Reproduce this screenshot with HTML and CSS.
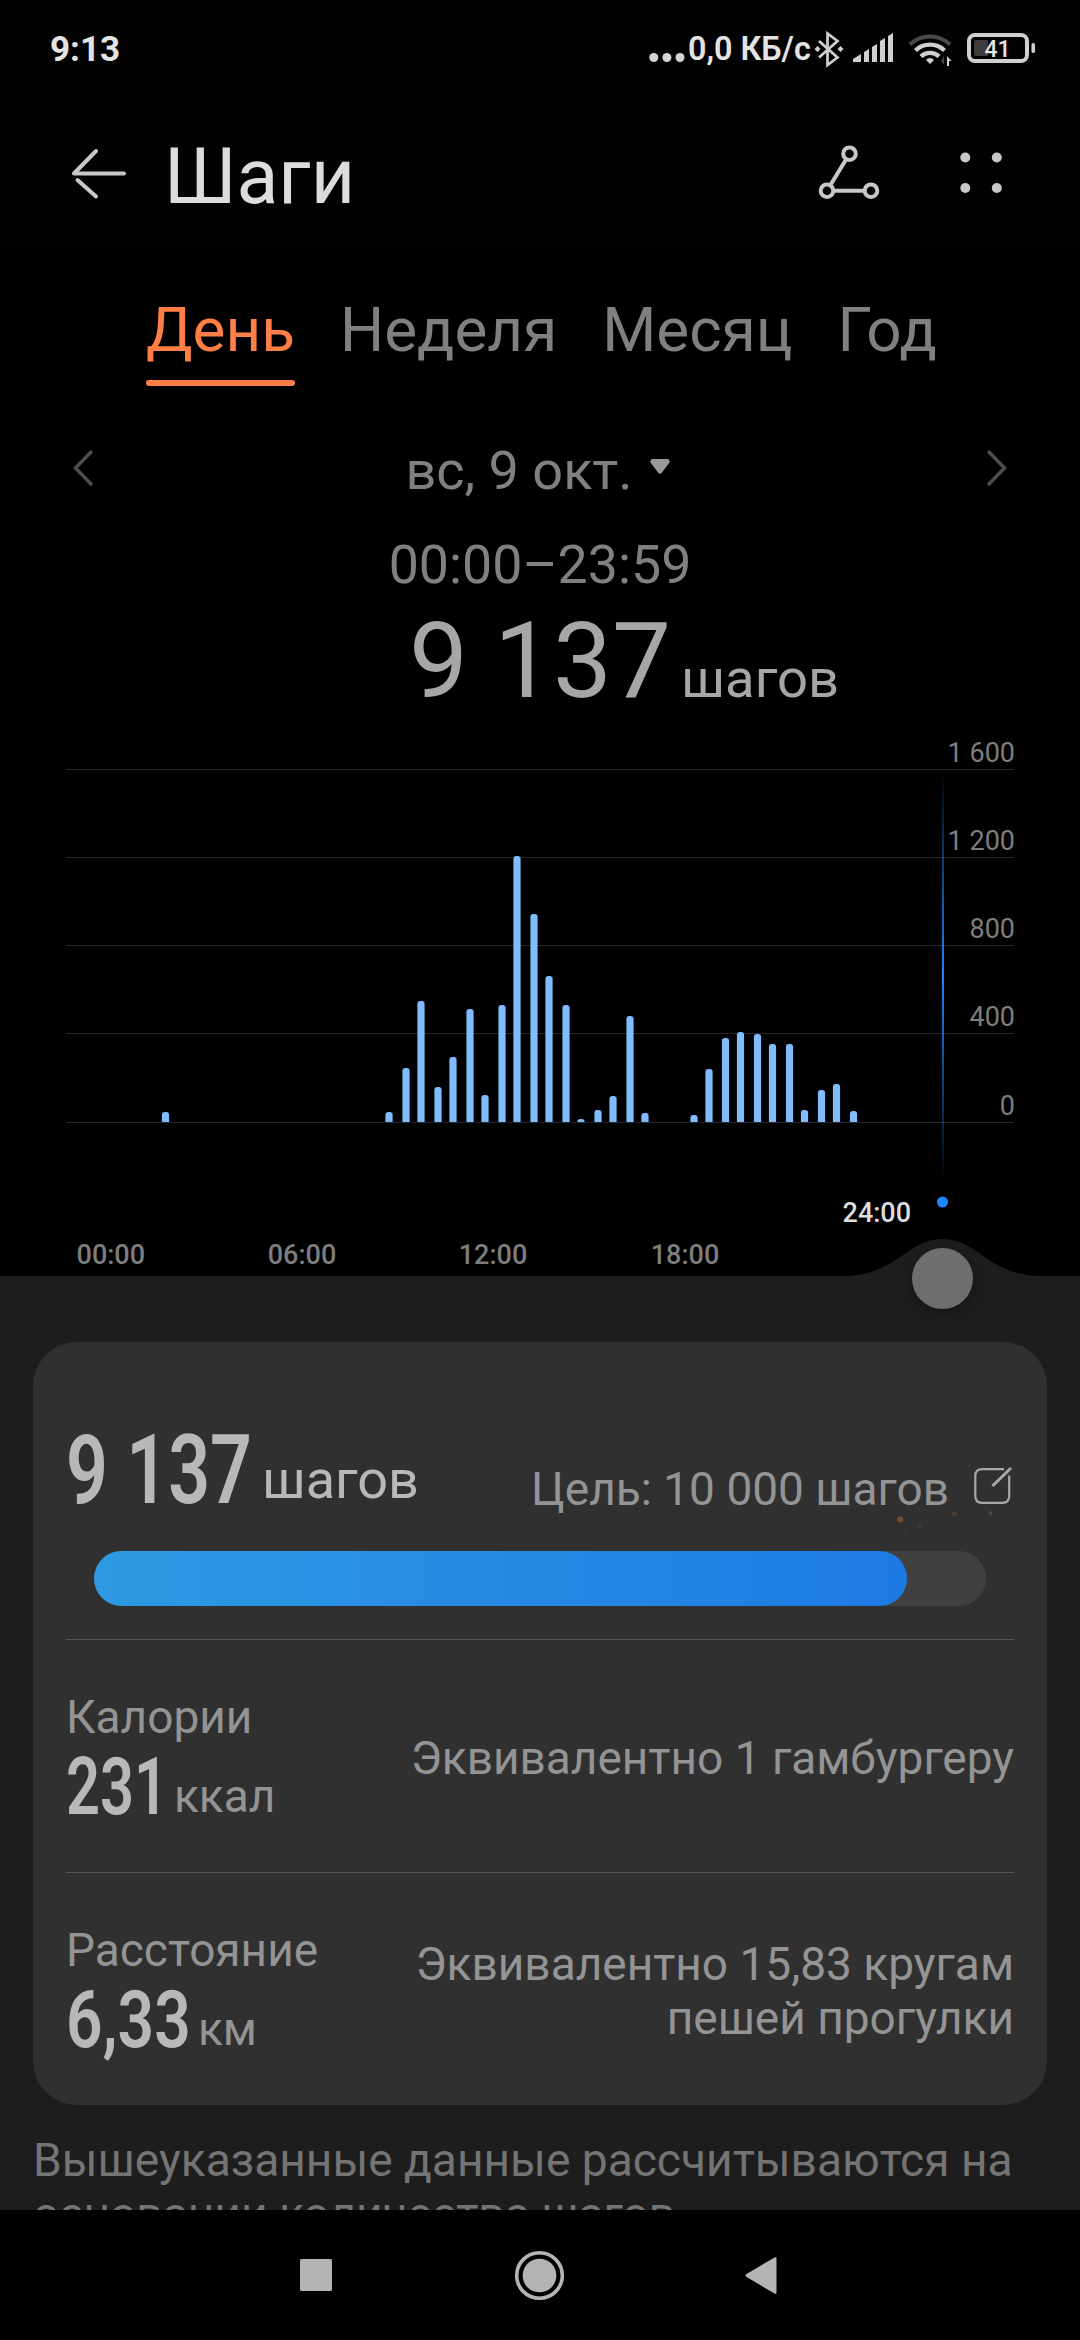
FILE: index.html
```html
<!DOCTYPE html>
<html lang="ru">
<head>
    <meta charset="UTF-8">
    <meta name="viewport" content="width=device-width, initial-scale=1.0">
    <title>Шаги</title>
    <link rel="stylesheet" href="styles.css">
</head>
<body>

<div class="status-bar">
    <span class="clock">9:13</span>
    <svg class="more-dots" width="36" height="34" viewBox="0 0 36 34" fill="#d4d4d4">
        <circle cx="4.8" cy="25.5" r="4.5"/><circle cx="17.9" cy="25.5" r="4.5"/><circle cx="31" cy="25.5" r="4.5"/>
    </svg>
    <span class="speed">0,0 КБ/с</span>
    <!-- bluetooth, signal, wifi, battery -->
    <svg class="status-icons" width="226" height="38" viewBox="812 30 226 38">
        <g fill="none" stroke="#d0d0d0" stroke-width="2.7">
            <path d="M819 41l18.500 16.500-10 7.500V33.500l10 7.500L819 57.500"/>
        </g>
        <path d="M817.500 46l3 3-3 3-3-3zM840.500 46l3 3-3 3-3-3z" fill="#d0d0d0"/>
        <g fill="#d0d0d0">
            <path d="M853 62v-3l8-5v8zM864 62V52l5-3v13zM872 62V47l5-3v18zM880 62V41l5-3v24zM888 62V36l5-3v29z"/>
        </g>
        <g fill="none" stroke-width="4.200">
            <path d="M910 44.500a29 29 0 0 1 40 0" stroke="#484848"/>
            <path d="M915.500 50.500a21 21 0 0 1 29 0" stroke="#d0d0d0"/>
            <path d="M921 56.500a13 13 0 0 1 18 0" stroke="#d0d0d0"/>
        </g>
        <path d="M926 60q4-4 8 0l-4 4z" fill="#d0d0d0"/>
        <path d="M944 56v9l-3-4z" fill="#444"/>
        <path d="M947 66V56l4.500 5H949v5z" fill="#d0d0d0"/>
        <rect x="969" y="35" width="58" height="26" rx="6" fill="none" stroke="#d0d0d0" stroke-width="4"/>
        <path d="M976 40h12v16h-12a2 2 0 0 1-2-2V42a2 2 0 0 1 2-2z" fill="#3c3c3c"/>
        <rect x="1031.500" y="43" width="3.500" height="10" rx="1.700" fill="#d0d0d0"/>
        <text class="battery-text" x="997.500" y="57" text-anchor="middle">41</text>
    </svg>
</div>

<header class="header">
    <svg class="back" width="56" height="54" viewBox="71 146 56 54" fill="none" stroke="#c8c8c8" stroke-width="4" stroke-linecap="round" stroke-linejoin="round">
        <path d="M124 172.500H74L96 150M77.500 179L96 195.500"/>
    </svg>
    <h1>Шаги</h1>
    <svg class="share" width="64" height="60" viewBox="817 143 64 60" fill="none" stroke="#c8c8c8" stroke-width="4">
        <circle cx="849.500" cy="152.700" r="6.300"/>
        <circle cx="827" cy="189.700" r="6.300"/>
        <circle cx="871" cy="189.700" r="6.300"/>
        <path d="M846.200 158.200L830.300 184.300M833.300 189.700h31.400"/>
    </svg>
    <svg class="menu" width="44" height="44" viewBox="959 150 44 44" fill="#c8c8c8">
        <circle cx="965.300" cy="155.500" r="5"/><circle cx="996.800" cy="155.500" r="5"/>
        <circle cx="965.300" cy="186" r="5"/><circle cx="996.800" cy="186" r="5"/>
    </svg>
</header>

<nav class="tabs">
    <span class="tab active">День</span>
    <span class="tab">Неделя</span>
    <span class="tab">Месяц</span>
    <span class="tab">Год</span>
</nav>

<div class="date-row">
    <svg width="22" height="38" viewBox="0 0 22 38" fill="none" stroke="#4d4d4d" stroke-width="3.500" stroke-linecap="round"><path d="M19 3L3.500 19 19 35"/></svg>
    <span class="date">вс, 9 окт.<svg class="caret" width="20" height="16" viewBox="0 0 20 16" fill="#999"><path d="M2 0h16q2.500 1.500 1.500 3.500L12 13.500q-2 2.500-4 0L.5 3.500Q-.5 1.500 2 0z"/></svg></span>
    <svg width="22" height="38" viewBox="0 0 22 38" fill="none" stroke="#4d4d4d" stroke-width="3.500" stroke-linecap="round"><path d="M3 3l15.500 16L3 35"/></svg>
</div>
<div class="time-range">00:00–23:59</div>
<div class="total"><span class="total-value">9 137</span><span class="total-unit">шагов</span></div>

<svg class="chart" width="1080" height="556" viewBox="0 720 1080 556">
    <defs>
        <linearGradient id="cursor" x1="0" y1="0" x2="0" y2="1">
            <stop offset="0" stop-color="#1b86ff" stop-opacity="0"/>
            <stop offset="0.5" stop-color="#1b86ff"/>
            <stop offset="1" stop-color="#1b86ff" stop-opacity="0"/>
        </linearGradient>
    </defs>
    <g fill="#262626">
        <rect x="66" y="769" width="948" height="1"/>
        <rect x="66" y="857" width="948" height="1"/>
        <rect x="66" y="945" width="948" height="1"/>
        <rect x="66" y="1033" width="948" height="1"/>
        <rect x="66" y="1122" width="948" height="1"/>
    </g>
    <!-- half-hour bars -->
    <g id="bars" fill="#80bcff"></g>
    <g class="y-labels" text-anchor="end">
        <text x="1015" y="762">1 600</text>
        <text x="1015" y="850">1 200</text>
        <text x="1015" y="938">800</text>
        <text x="1015" y="1026">400</text>
        <text x="1015" y="1115">0</text>
    </g>
    <g class="x-labels" text-anchor="middle">
        <text x="110.800" y="1264">00:00</text>
        <text x="302" y="1264">06:00</text>
        <text x="493" y="1264">12:00</text>
        <text x="685" y="1264">18:00</text>
        <text class="current" x="876.800" y="1222">24:00</text>
    </g>
    <rect x="942" y="769" width="2" height="415" fill="url(#cursor)"/>
    <circle cx="942.500" cy="1202" r="5.500" fill="#1b86ff"/>
    <path d="M842 1276C898 1276 906 1239 942.500 1239S987 1276 1043 1276z" fill="#1d1d1d"/>
</svg>

<main class="content">
    <div class="knob"></div>
    <section class="card">
        <div class="summary">
            <span class="num num-steps">9 137</span>
            <span class="summary-unit">шагов</span>
            <span class="goal">Цель: 10 000 шагов</span>
            <svg class="edit" width="38" height="38" viewBox="0 0 38 38" fill="none" stroke="#a8a8a8" stroke-width="2.200">
                <path d="M30 2.100H8Q1.300 2.100 1.300 9v20q0 6.800 6.700 6.800h20.500q6.700 0 6.700-6.800V8.500"/>
                <path d="M18.500 19L37 1" stroke-width="3"/>
            </svg>
            <svg class="sparks" width="110" height="30" viewBox="890 1508 110 30" fill="#8f562e">
                <circle cx="900.300" cy="1519.500" r="3" opacity=".75"/>
                <circle cx="954.600" cy="1514" r="2.600" opacity=".3"/>
                <circle cx="990.700" cy="1513" r="1.800" opacity=".6"/>
                <circle cx="920" cy="1527.500" r="1.400" opacity=".35"/>
                <circle cx="906" cy="1533" r="1.200" opacity=".3"/>
                <circle cx="946.500" cy="1511.500" r="1" opacity=".3"/>
            </svg>
        </div>
        <div class="progress"><div class="progress-fill" style="width: 91.1%"></div></div>
        <div class="metric">
            <div>
                <div class="metric-name">Калории</div>
                <div class="metric-value">
                    <span class="num num-kcal">231</span>
                    <span class="metric-unit">ккал</span>
                </div>
            </div>
            <p class="metric-note">Эквивалентно 1 гамбургеру</p>
        </div>
        <div class="metric">
            <div>
                <div class="metric-name">Расстояние</div>
                <div class="metric-value">
                    <span class="num num-km">6,33</span>
                    <span class="metric-unit">км</span>
                </div>
            </div>
            <p class="metric-note">Эквивалентно 15,83 кругам<br>пешей прогулки</p>
        </div>
    </section>
    <p class="footnote">Вышеуказанные данные рассчитываются на<br>основании количества шагов.</p>
</main>

<div class="nav-bar">
    <svg width="1080" height="130" viewBox="0 2210 1080 130" fill="#b4b4b4">
        <rect x="300" y="2259" width="32" height="32" rx="1.500"/>
        <circle cx="539.500" cy="2275.500" r="22.800" fill="none" stroke="#b4b4b4" stroke-width="3.600"/>
        <circle cx="539.500" cy="2275.500" r="16.800"/>
        <path d="M776.500 2258.500v34q0 2-2 1l-28-16.500q-2-1.500 0-3l28-16.500q2-1 2 1z"/>
    </svg>
</div>

<script>
    // [center x, top y] of every bar, all of them stand on the zero line
    const bars = [
        [165.5, 1112], [389, 1112], [406, 1068], [421, 1001], [438, 1087], [453, 1057],
        [470, 1009], [485, 1095], [502, 1005], [517, 856], [534, 914], [549, 976],
        [566, 1005], [581, 1119], [598, 1110], [613, 1096], [630, 1016], [645, 1113],
        [694, 1115], [709, 1069], [725.5, 1038], [740.5, 1032], [757.5, 1034], [772.5, 1044],
        [789.5, 1044], [804.5, 1110], [821.5, 1090], [836.5, 1084], [853.5, 1111]
    ];
    const base = 1122;
    document.getElementById('bars').innerHTML = bars.map(function([x, y]) {
        const left = x - 3.6;
        const r = Math.min(3, base - y);
        return `<path d="M${left} ${base}V${y + r}q0-${r} ${r}-${r}h${7.2 - 2 * r}q${r} 0 ${r} ${r}V${base}z"/>`;
    }).join('');
</script>

</body>
</html>
```

FILE: styles.css
```css
body {
    font-family: Roboto, "Noto Sans", sans-serif;
    margin: 0;
    width: 1080px;
    height: 2340px;
    overflow: hidden;
    background-color: #000;
    color: #808080;
}
svg {
    display: block;
    flex: none;
}
p, h1 {
    margin: 0;
}
.status-bar {
    display: flex;
    align-items: center;
    height: 98px;
    padding: 0 42px 0 50px;
    background-color: #020202;
    color: #e4e4e4;
}
.clock {
    flex: 1;
    font-size: 35px;
    font-weight: 700;
}
.speed {
    width: 124px;
    font-size: 32.3px;
    font-weight: 600;
    white-space: nowrap;
}
.more-dots {
    margin-right: 3px;
}
.battery-text {
    font-size: 23px;
    font-weight: 500;
    fill: #e4e4e4;
}
.header {
    display: flex;
    align-items: center;
    height: 152px;
    padding: 0 77px 0 71px;
    background-color: #020202;
}
.back {
    margin-right: 37px;
}
.header h1 {
    flex: 1;
    padding-top: 5px;
    font-size: 77px;
    font-weight: 400;
    color: #dcdcdc;
}
.share {
    margin-right: 78px;
}
.tabs {
    display: flex;
    gap: 45px;
    height: 96px;
    padding: 40px 0 0 146px;
    font-size: 62px;
    line-height: 80px;
}
.tab.active {
    color: #ff7f46;
}
.tab.active::after {
    content: "";
    display: block;
    height: 6px;
    margin-top: 10px;
    border-radius: 3px;
    background-color: #ff7f46;
}
.date-row {
    display: flex;
    align-items: center;
    justify-content: space-between;
    height: 61px;
    margin-top: 54px;
    padding: 0 72px;
    font-size: 54px;
}
.date-row > svg {
    margin-bottom: 5px;
}
.date {
    display: flex;
    align-items: center;
    padding-right: 5px;
}
.caret {
    margin: 0 0 8px 17px;
}
.time-range {
    margin-top: 33px;
    font-size: 53.7px;
    line-height: 61px;
    text-align: center;
}
.total {
    display: flex;
    align-items: baseline;
    height: 105px;
    margin-top: 14px;
    padding: 0 0 6px 409px;
    line-height: 105px;
    color: #a6a6a6;
}
.total-value {
    font-size: 105px;
}
.total-unit {
    margin-left: 10px;
    font-size: 54.4px;
}
.y-labels {
    font-size: 27px;
    fill: #7d7d7d;
}
.x-labels {
    font-size: 27px;
    font-weight: 500;
    fill: #7d7d7d;
}
.x-labels .current {
    fill: #dedede;
}
.content {
    position: relative;
    height: 868px;
    padding-top: 66px;
    background-color: #1d1d1d;
}
/* drag handle of the chart cursor */
.knob {
    position: absolute;
    left: 912px;
    top: -28px;
    width: 61px;
    height: 61px;
    border-radius: 50%;
    background-color: #6e6e6e;
    box-shadow: 0 4px 14px rgba(0, 0, 0, 0.3);
}
.card {
    box-sizing: border-box;
    height: 763px;
    margin: 0 33px;
    padding: 0 33px;
    border-radius: 44px;
    background-color: #303030;
}
.summary {
    position: relative;
    box-sizing: border-box;
    display: flex;
    align-items: flex-end;
    height: 209px;
    padding-bottom: 35px;
}
/* condensed numerals */
.num {
    flex: none;
    margin-bottom: 7px;
    font-size: 80px;
    font-weight: 600;
    line-height: 58px;
    white-space: nowrap;
    color: #b8b8b8;
    transform-origin: left;
}
.num-steps {
    width: 188px;
    margin-bottom: 11px;
    font-size: 96px;
    line-height: 70px;
    transform: scaleX(0.765);
}
.num-kcal {
    width: 100px;
    transform: scaleX(0.745);
}
.num-km {
    width: 124px;
    transform: scaleX(0.8);
}
.summary-unit {
    margin: 0 0 4px 8px;
    font-size: 54px;
    line-height: 64px;
    color: #b8b8b8;
}
.goal {
    margin-left: auto;
    font-size: 46px;
    line-height: 54px;
    color: #949494;
}
.edit {
    margin: 0 2px 11px 25px;
}
.sparks {
    position: absolute;
    left: 824px;
    top: 166px;
}
.progress {
    height: 55px;
    margin: 0 28px;
    border-radius: 28px;
    background-color: #404040;
}
.progress-fill {
    height: 100%;
    border-radius: 28px;
    background: linear-gradient(to right, #2e9ae2, #1d7ae4);
}
.metric {
    box-sizing: border-box;
    display: flex;
    align-items: center;
    justify-content: space-between;
    height: 233px;
    border-top: 1px solid #585858;
    font-size: 46px;
    line-height: 54px;
    color: #949494;
}
.progress + .metric {
    margin-top: 33px;
}
.metric-value {
    display: flex;
    align-items: flex-end;
    height: 79px;
}
.metric-unit {
    margin-left: 8px;
}
.metric-note {
    padding-top: 4px;
    text-align: right;
}
.footnote {
    margin: 28px 33px 0;
    font-size: 46.1px;
    line-height: 54px;
    color: #747474;
    white-space: nowrap;
}
.nav-bar {
    position: relative;
    height: 130px;
    background-color: #000;
}
```
